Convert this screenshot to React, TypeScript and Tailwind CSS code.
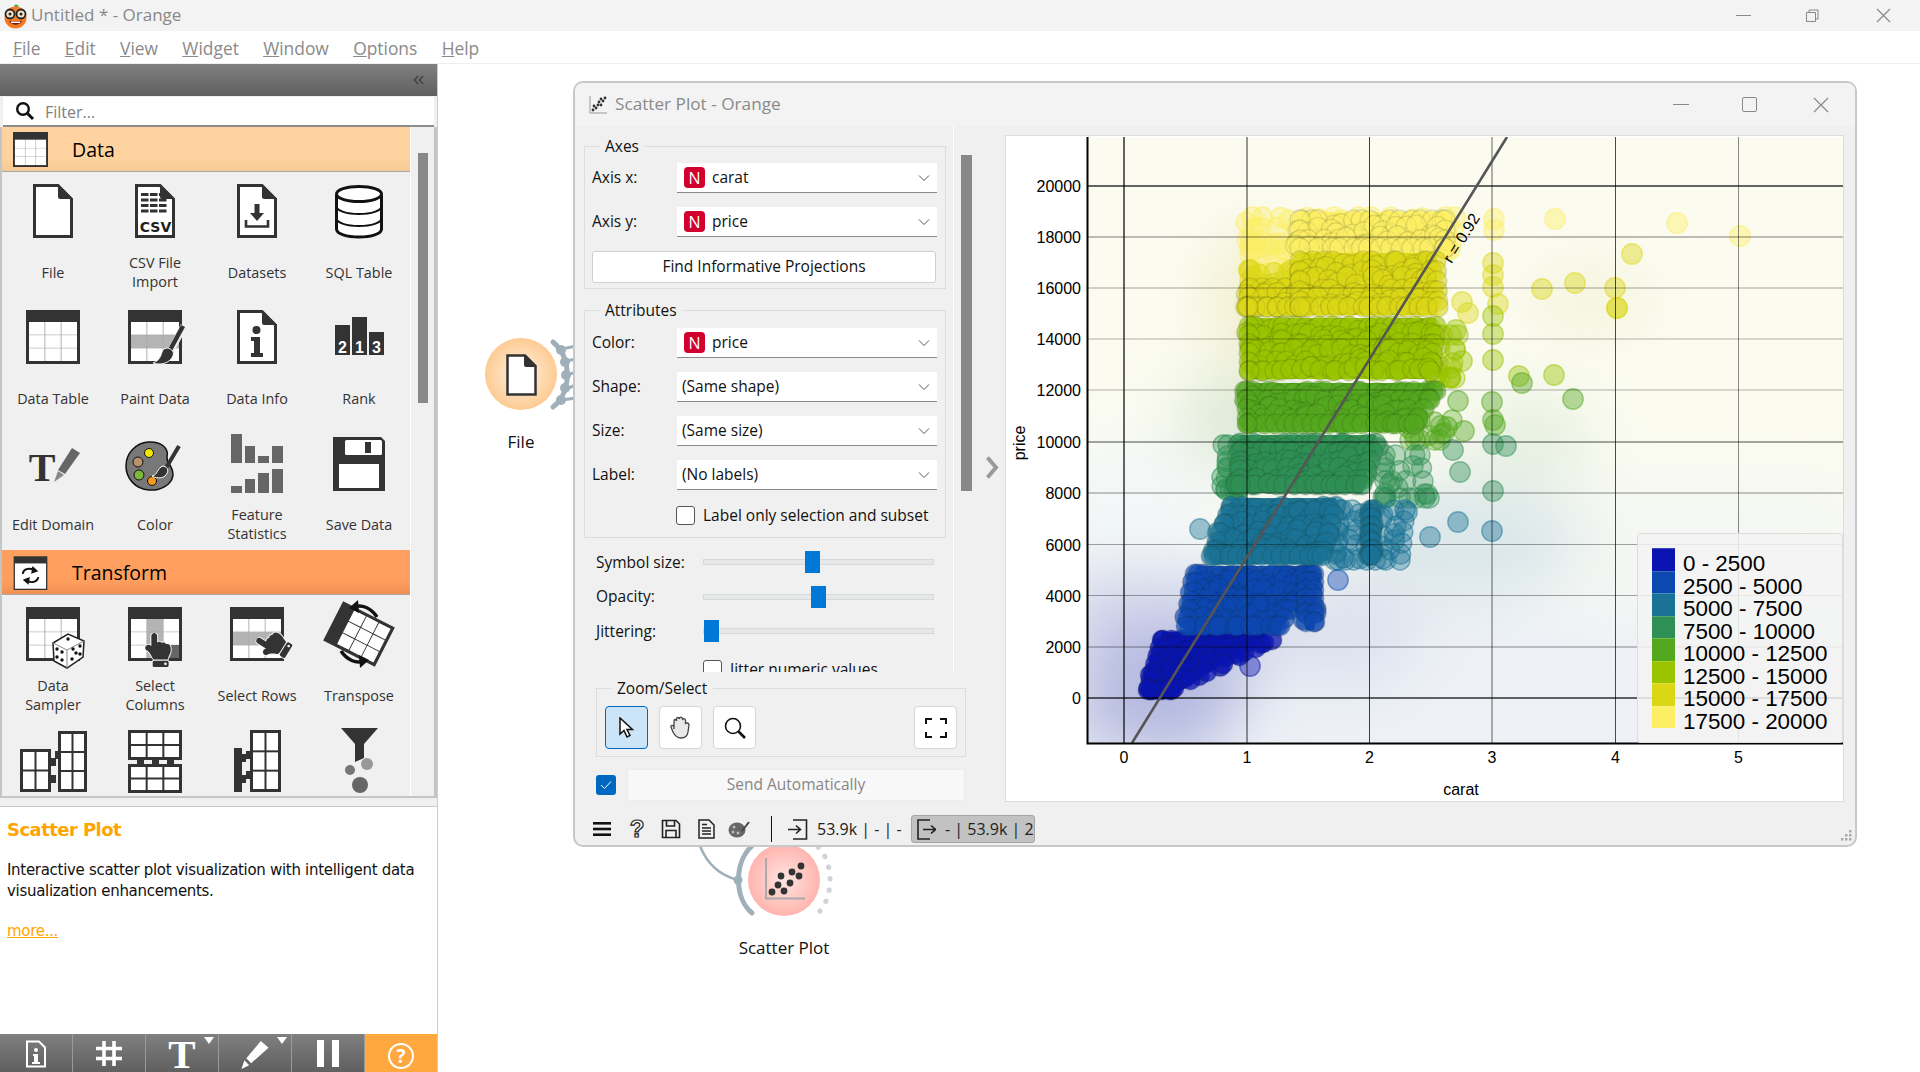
import { ReactNode, useMemo } from "react";
import { FaHandPointUp } from "react-icons/fa";

const DARK = "#333333";

// ---------- toolbox icons (76x66 box, centred on the cell) ----------
const Doc = ({ children }: { children?: ReactNode }) => (
  <>
    <path d="M19.5 7.5H43L56.5 21V58.5H19.5Z" fill="#fff" stroke={DARK} strokeWidth="3" />
    <path d="M43 6L58 21H45.5Q43 21 43 18.5Z" fill={DARK} />
    {children}
  </>
);

const Grid = ({ gray = [] }: { gray?: number[][] }) => {
  const cells = [];
  for (let r = 0; r < 3; r++) {
    for (let c = 0; c < 3; c++) {
      const isGray = gray.some((g) => g[0] === r && g[1] === c);
      cells.push(
        <rect key={`${r}-${c}`} x={14 + c * 16.3} y={18 + r * 13.2} width={15.4} height={12.6} fill={isGray ? "#b4b4b4" : "#fff"} />,
      );
    }
  }
  return (
    <>
      <rect x="11" y="6" width="54" height="54" fill={DARK} />
      <rect x="14" y="18" width="48" height="39" fill="#aaa" />
      {cells}
    </>
  );
};

const Frag = ({ x, y, w, h, cols, rows }: { x: number; y: number; w: number; h: number; cols: number; rows: number }) => {
  const cells = [];
  const cw = (w - 6 - (cols - 1) * 2) / cols;
  const ch = (h - 6 - (rows - 1) * 2) / rows;
  for (let r = 0; r < rows; r++) {
    for (let c = 0; c < cols; c++) {
      cells.push(<rect key={`${r}-${c}`} x={x + 3 + c * (cw + 2)} y={y + 3 + r * (ch + 2)} width={cw} height={ch} fill="#fff" />);
    }
  }
  return (
    <>
      <rect x={x} y={y} width={w} height={h} fill={DARK} />
      {cells}
    </>
  );
};

const Hand = ({ x, y, rotate = 0 }: { x: number; y: number; rotate?: number }) => (
  <g transform={`rotate(${rotate} ${x + 17} ${y + 17})`}>
    <FaHandPointUp x={x} y={y} size={34} color={DARK} stroke="#f4f4f4" strokeWidth={30} style={{ paintOrder: "stroke" }} />
  </g>
);

const Dice = () => (
  <g>
    <path d="M38 42L53 33L69 40L68 56L52 67L39 60Z" fill="#fff" stroke="#222" strokeWidth="1.5" />
    <path d="M38 42L52 49L69 40M52 49V67" fill="none" stroke="#888" strokeWidth="1" />
    {[[53, 38], [42, 48], [47, 51], [42, 56], [47, 59], [58, 48], [65, 45], [61, 52], [57, 58], [65, 53]].map((d) => (
      <circle key={d.join()} cx={d[0]} cy={d[1]} r="1.7" fill="#111" />
    ))}
  </g>
);

const Bars = ({ data }: { data: number[][] }) => (
  <>
    {data.map((b) => (
      <rect key={b.join()} x={b[0]} y={b[1]} width={b[2]} height={b[3]} fill="#666" />
    ))}
  </>
);

const tools: { title: string; tools: { label: string; icon: ReactNode }[] }[] = [
  {
    title: "Data",
    tools: [
      { label: "File", icon: <Doc /> },
      {
        label: "CSV File\nImport",
        icon: (
          <Doc>
            {[15, 20.5, 26, 31.5].map((y) => (
              <g key={y} fill="#333">
                <rect x="24" y={y} width="7.5" height="3" />
                <rect x="33" y={y} width="7.5" height="3" />
                <rect x="42" y={y} width="7.5" height="3" />
              </g>
            ))}
            <text x="38.5" y="54" textAnchor="middle" fontFamily="'DejaVu Sans', sans-serif" fontWeight="700" fontSize="14" fill="#222">
              CSV
            </text>
          </Doc>
        ),
      },
      {
        label: "Datasets",
        icon: (
          <Doc>
            <path d="M35.5 26H40.5V35H45L38 43L31 35H35.5Z" fill="#333" />
            <path d="M27 42V48.5H49V42" fill="none" stroke="#333" strokeWidth="2.6" />
          </Doc>
        ),
      },
      {
        label: "SQL Table",
        icon: (
          <g fill="none" stroke="#111" strokeWidth="3">
            <path d="M15.5 17V51C15.5 56 26 59 38 59S60.5 56 60.5 51V17" fill="#fff" />
            <ellipse cx="38" cy="16" rx="22.5" ry="7.5" fill="#fff" />
            <path d="M15.5 28C15.5 33 26 36 38 36S60.5 33 60.5 28" strokeWidth="2" />
            <path d="M15.5 40C15.5 45 26 48 38 48S60.5 45 60.5 40" strokeWidth="2" />
          </g>
        ),
      },
      { label: "Data Table", icon: <Grid /> },
      {
        label: "Paint Data",
        icon: (
          <>
            <Grid gray={[[1, 0], [1, 1], [1, 2]]} />
            <path d="M67 22L54 46" stroke="#f0f0f0" strokeWidth="7" />
            <path d="M66 22L53 46" stroke={DARK} strokeWidth="4.5" />
            <path d="M51 44C57 46 58 50 54 55C50 60 42 61 36 59C42 57 44 52 45 48C46 45 48 44 51 44Z" fill={DARK} stroke="#f0f0f0" strokeWidth="1" />
          </>
        ),
      },
      {
        label: "Data Info",
        icon: (
          <Doc>
            <circle cx="37.5" cy="26" r="4" fill="#333" />
            <path d="M32 33H41V49H44V53H32V49H35V37H32Z" fill="#333" />
          </Doc>
        ),
      },
      {
        label: "Rank",
        icon: (
          <g fontFamily="'Liberation Sans', sans-serif" fontWeight="700" fontSize="16" fill="#fff" textAnchor="middle">
            <rect x="14" y="21" width="15" height="30" fill={DARK} />
            <rect x="31" y="13" width="15" height="38" fill={DARK} />
            <rect x="48" y="28" width="15" height="23" fill={DARK} />
            <text x="21.5" y="49">2</text>
            <text x="38.5" y="49">1</text>
            <text x="55.5" y="49">3</text>
          </g>
        ),
      },
      {
        label: "Edit Domain",
        icon: (
          <>
            <text x="27" y="51" textAnchor="middle" fontFamily="'Liberation Serif', serif" fontWeight="700" fontSize="40" fill={DARK}>
              T
            </text>
            <path d="M57 18L65 23L50 44L43 40Z" fill="#666" />
            <path d="M43 41L49 45L39 52Z" fill="#888" />
          </>
        ),
      },
      {
        label: "Color",
        icon: (
          <>
            <path d="M31 12C44 11 52 18 50 27C49 33 56 35 56 45C55 55 43 61 32 60C18 59 9 48 9 36C9 23 19 13 31 12Z" fill="#787878" stroke="#111" strokeWidth="1.5" />
            <circle cx="32" cy="23" r="4.5" fill="#f5e600" stroke="#111" />
            <circle cx="21" cy="32" r="5" fill="#b8926a" stroke="#111" />
            <circle cx="22" cy="45" r="5" fill="#7db83a" stroke="#111" />
            <circle cx="35" cy="51" r="4.5" fill="#f39a1f" stroke="#111" />
            <path d="M62 16L49 38" stroke="#333" strokeWidth="4" />
            <path d="M46 36C52 37 52 42 48 46C44 49 38 48 35 46C41 45 40 38 46 36Z" fill="#333" stroke="#fff" strokeWidth="1" />
          </>
        ),
      },
      {
        label: "Feature\nStatistics",
        icon: (
          <Bars
            data={[
              [12, 4, 11, 29], [26, 16, 10, 17], [39, 26, 11, 7], [53, 16, 11, 17],
              [12, 56, 11, 7], [26, 49, 10, 14], [39, 43, 11, 20], [53, 39, 11, 24],
            ]}
          />
        ),
      },
      {
        label: "Save Data",
        icon: (
          <>
            <path d="M12 7H60L64 11V61H12Z" fill={DARK} />
            <rect x="24" y="10" width="37" height="15" rx="1.5" fill="#fff" />
            <rect x="44" y="12" width="6" height="11" fill={DARK} />
            <rect x="18" y="34" width="40" height="24" fill="#fff" />
          </>
        ),
      },
    ],
  },
  {
    title: "Transform",
    tools: [
      {
        label: "Data\nSampler",
        icon: (
          <>
            <Grid />
            <Dice />
          </>
        ),
      },
      {
        label: "Select\nColumns",
        icon: (
          <>
            <Grid gray={[[0, 1], [1, 1], [2, 1]]} />
            <rect x="46" y="44" width="16" height="13" fill="#666" />
            <Hand x={24} y={32} />
          </>
        ),
      },
      {
        label: "Select Rows",
        icon: (
          <>
            <Grid gray={[[1, 0], [1, 1], [1, 2]]} />
            <Hand x={37} y={27} rotate={-58} />
          </>
        ),
      },
      {
        label: "Transpose",
        icon: (
          <>
            <g transform="rotate(27 38 33)">
              <rect x="9" y="11" width="58" height="44" fill={DARK} />
              <rect x="23" y="14" width="41" height="38" fill={DARK} />
              {[0, 1, 2].map((c) =>
                [0, 1, 2].map((r) => <rect key={`${c}${r}`} x={23 + c * 13.9} y={14 + r * 12.9} width={13} height={12} fill="#fff" />),
              )}
            </g>
            <path d="M33 6C41 3 50 7 56 16" fill="none" stroke="#111" strokeWidth="3.5" />
            <path d="M37 -1L28 7L38 12Z" fill="#111" />
            <path d="M43 60C35 63 26 59 20 50" fill="none" stroke="#111" strokeWidth="3.5" />
            <path d="M39 67L48 59L38 54Z" fill="#111" />
          </>
        ),
      },
      {
        label: "",
        icon: (
          <>
            <Frag x={5} y={22} w={31} h={43} cols={2} rows={2} />
            <rect x="36" y="31" width="5" height="8" fill={DARK} />
            <rect x="36" y="48" width="5" height="8" fill={DARK} />
            <rect x="40" y="24" width="5" height="8" fill={DARK} />
            <Frag x={43} y={4} w={29} h={61} cols={2} rows={3} />
          </>
        ),
      },
      {
        label: "",
        icon: (
          <>
            <Frag x={11} y={3} w={54} h={30} cols={3} rows={2} />
            <Frag x={11} y={37} w={54} h={29} cols={3} rows={2} />
            <rect x="20" y="31" width="7" height="7" fill={DARK} />
            <rect x="35" y="31" width="7" height="7" fill={DARK} />
            <rect x="50" y="31" width="7" height="7" fill={DARK} />
          </>
        ),
      },
      {
        label: "",
        icon: (
          <>
            <rect x="15" y="21" width="8" height="44" fill={DARK} />
            <rect x="23" y="27" width="4" height="8" fill={DARK} />
            <rect x="23" y="48" width="4" height="8" fill={DARK} />
            <rect x="27" y="24" width="5" height="8" fill={DARK} />
            <rect x="27" y="44" width="5" height="8" fill={DARK} />
            <Frag x={31} y={3} w={31} h={62} cols={2} rows={3} />
          </>
        ),
      },
      {
        label: "",
        icon: (
          <>
            <path d="M20 1H57L43 17V31L34 35V17Z" fill={DARK} />
            <circle cx="46" cy="37" r="6" fill="#999" />
            <circle cx="29" cy="43" r="5" fill="#777" />
            <circle cx="39" cy="58" r="8" fill="#666" />
          </>
        ),
      },
    ],
  },
];

const Tool = ({ label, icon }: { label: string; icon: ReactNode }) => (
  <div className="flex h-[126px] w-[102px] flex-col items-center">
    <svg width="76" height="66" viewBox="0 0 76 66" className="mt-[6px] shrink-0 overflow-visible">
      {icon}
    </svg>
    <div className="mt-[8px] flex h-[40px] items-center justify-center whitespace-pre-line text-center text-[14.4px] leading-[19px] text-[#333]">
      {label}
    </div>
  </div>
);

const Category = ({ title, active }: { title: string; active?: boolean }) => (
  <div
    className={`flex h-[45px] items-center border-b border-[#a8a8a8] pl-[11px] ${
      active ? "bg-gradient-to-b from-[#ff9f5f] from-70% to-[#ef8f52]" : "bg-gradient-to-b from-[#ffd39f] from-70% to-[#f6ca94]"
    }`}
  >
    <svg width="35" height="35" viewBox="11 6 54 54" className="shrink-0">
      {active ? (
        <>
          <rect x="13" y="9" width="50" height="50" fill="#fff" stroke="#333" strokeWidth="2" />
          <rect x="13" y="9" width="50" height="10" fill="#333" />
          <path d="M26 35C27 28 35 25 43 29" fill="none" stroke="#111" strokeWidth="3" />
          <path d="M41 23L50 31L39 35Z" fill="#111" />
          <path d="M50 40C49 47 41 50 33 46" fill="none" stroke="#111" strokeWidth="3" />
          <path d="M35 52L26 44L37 40Z" fill="#111" />
        </>
      ) : (
        <Grid />
      )}
    </svg>
    <span className="ml-[24px] pt-[2px] text-[19.5px] text-black">{title}</span>
  </div>
);

const Dock = () => (
  <div className="relative z-10 flex w-[437px] shrink-0 flex-col bg-[#f0f0f0] shadow-[1px_0_0_#cccccc]">
    <div className="flex h-[32px] shrink-0 items-center justify-end bg-gradient-to-b from-[#808080] to-[#5f5f5f] pr-[13px]">
      <svg width="11" height="10" viewBox="0 0 11 10" fill="none" stroke="#444" strokeWidth="1.6">
        <path d="M5 1L1.500 5L5 9M10 1L6.500 5L10 9" />
      </svg>
    </div>
    <div className="mx-[3px] mt-[1px] flex h-[30px] shrink-0 items-center border-b-2 border-[#8c8c8c] bg-white pl-[12px]">
      <svg width="20" height="20" viewBox="0 0 20 20">
        <circle cx="8" cy="8" r="5.8" fill="none" stroke="#111" strokeWidth="2.4" />
        <path d="M12.5 12.5L18 18" stroke="#111" strokeWidth="3" />
      </svg>
      <span className="ml-[10px] pt-[2px] text-[16px] text-[#808080]">Filter...</span>
    </div>
    <div className="flex h-[671px] shrink-0 overflow-hidden border-b-2 border-l-2 border-r-[3px] border-[#c2c6c6]">
      <div className="w-[408px] shrink-0">
        {tools.map((group) => (
          <div key={group.title}>
            <Category title={group.title} active={group.title === "Transform"} />
            <div className="flex flex-wrap">
              {group.tools.map((t, i) => (
                <Tool key={i} label={t.label} icon={t.icon} />
              ))}
            </div>
          </div>
        ))}
      </div>
      <div className="flex-1 border-l border-white pl-[7px] pt-[26px]">
        <div className="h-[250px] w-[10px] bg-[#888888]" />
      </div>
    </div>
    <div className="h-[9px] shrink-0 border-b border-[#c8cccc] bg-[#f0f0f0]" />
    <div className="flex-1 bg-white px-[7px] pt-[11px] font-['DejaVu_Sans',sans-serif] text-[#111]">
      <div className="text-[18px] font-bold leading-[24px] tracking-[-0.55px] text-[#ffa500]">Scatter Plot</div>
      <p className="mt-[18px] text-[15px] leading-[21px] tracking-[-0.3px]">
        Interactive scatter plot visualization with intelligent data visualization enhancements.
      </p>
      <a className="mt-[18px] block text-[15px] tracking-[-0.3px] text-[#ffa500] underline">more...</a>
    </div>
    <DockToolbar />
  </div>
);

const DockToolbar = () => (
  <div className="flex h-[38px] shrink-0 bg-gradient-to-b from-[#808080] to-[#5f5f5f]">
    <ToolbarButton>
      <svg width="22" height="28" viewBox="0 0 22 28">
        <path d="M2 1.5H14L20 7.5V26.5H2Z" fill="none" stroke="#fff" strokeWidth="2" />
        <circle cx="11" cy="10" r="2" fill="#fff" />
        <path d="M8 14H13V22H15V24H7V22H9V16H8Z" fill="#fff" />
      </svg>
    </ToolbarButton>
    <ToolbarButton>
      <svg width="28" height="27" viewBox="0 0 28 27" stroke="#fff" strokeWidth="3.6">
        <path d="M9 1V26M19 1V26M1 8.500H27M1 18.500H27" />
      </svg>
    </ToolbarButton>
    <ToolbarButton menu>
      <span className="font-['Liberation_Serif',serif] text-[41px] font-bold leading-[28px] text-white">T</span>
    </ToolbarButton>
    <ToolbarButton menu>
      <svg width="28" height="29" viewBox="0 0 28 30">
        <path d="M20 1L28 8L10 24L5 19Z M3 21L8 26L0 30Z" fill="#fff" />
      </svg>
    </ToolbarButton>
    <ToolbarButton>
      <div className="flex gap-[8px]">
        <div className="h-[27px] w-[7px] bg-white" />
        <div className="h-[27px] w-[7px] bg-white" />
      </div>
    </ToolbarButton>
    <div className="flex flex-1 items-start justify-center bg-[#ffa840] pt-[9px]">
      <div className="flex h-[26px] w-[26px] items-center justify-center rounded-full border-2 border-white text-[19px] font-bold leading-none text-white">
        ?
      </div>
    </div>
  </div>
);

const ToolbarButton = ({ children, menu }: { children: ReactNode; menu?: boolean }) => (
  <div className="relative flex h-full w-[73px] items-start justify-center border-r border-[#9a9a9a] pt-[6px]">
    {children}
    {menu && <span className="absolute right-[4px] top-[3px] h-0 w-0 border-x-[5px] border-t-[7px] border-x-transparent border-t-white" />}
  </div>
);

// ---------- scatter plot ----------
const BANDS = {
  c0: "#0a14b0",
  c1: "#0d47b0",
  c2: "#1a7396",
  c3: "#2f9055",
  c4: "#54a81e",
  c5: "#9ac400",
  c6: "#dcd716",
  c7: "#fdee65",
};

// colour, y0, left0, right0, y1, left1, right1, step, alpha (from 0.55 up the region gets a solid body)
type Region = [string, number, number, number, number, number, number, number, number];
const regions: Region[] = [
  [BANDS.c7, 217, 1252, 1455, 250, 1252, 1450, 13, 0.38],
  [BANDS.c7, 240, 1250, 1300, 272, 1250, 1300, 15, 0.3],
  [BANDS.c7, 220, 1300, 1445, 248, 1300, 1445, 10, 0.55],
  [BANDS.c6, 270, 1250, 1296, 290, 1250, 1296, 11, 0.4],
  [BANDS.c6, 288, 1250, 1300, 307, 1248, 1300, 9, 0.55],
  [BANDS.c6, 261, 1300, 1436, 307, 1300, 1438, 10, 0.6],
  [BANDS.c5, 335, 1442, 1458, 378, 1435, 1450, 14, 0.32],
  [BANDS.c5, 326, 1249, 1436, 371, 1249, 1430, 9, 0.6],
  [BANDS.c4, 420, 1420, 1452, 440, 1410, 1440, 13, 0.33],
  [BANDS.c4, 391, 1247, 1436, 424, 1247, 1414, 9, 0.62],
  [BANDS.c3, 445, 1228, 1238, 490, 1226, 1238, 11, 0.38],
  [BANDS.c3, 455, 1385, 1420, 498, 1385, 1425, 13, 0.32],
  [BANDS.c3, 443, 1240, 1376, 485, 1240, 1362, 9, 0.62],
  [BANDS.c0, 640, 1162, 1272, 690, 1148, 1170, 8, 0.75],
  [BANDS.c1, 574, 1198, 1312, 626, 1186, 1280, 9, 0.65],
  [BANDS.c1, 574, 1306, 1314, 622, 1306, 1314, 8, 0.6],
  [BANDS.c2, 510, 1340, 1405, 560, 1335, 1400, 11, 0.34],
  [BANDS.c2, 506, 1231, 1336, 556, 1211, 1322, 9, 0.65],
  [BANDS.c2, 510, 1370, 1372, 555, 1370, 1372, 8, 0.6],
];

// isolated points, in reference pixels
const lone: [number, number, string][] = [
  [1494, 219, BANDS.c7], [1555, 219, BANDS.c7], [1677, 223, BANDS.c7], [1740, 236, BANDS.c7],
  [1494, 230, BANDS.c7], [1632, 254, BANDS.c6], [1493, 263, BANDS.c6], [1542, 289, BANDS.c6],
  [1575, 283, BANDS.c6], [1615, 288, BANDS.c6], [1617, 308, BANDS.c6], [1617, 308, BANDS.c6],
  [1493, 275, BANDS.c6], [1493, 287, BANDS.c6], [1498, 304, BANDS.c6], [1462, 302, BANDS.c6],
  [1468, 313, BANDS.c6], [1493, 316, BANDS.c5], [1493, 334, BANDS.c5], [1456, 330, BANDS.c5],
  [1462, 361, BANDS.c5], [1493, 360, BANDS.c5], [1519, 376, BANDS.c5], [1522, 383, BANDS.c4],
  [1554, 375, BANDS.c5], [1573, 399, BANDS.c4], [1492, 402, BANDS.c4], [1458, 401, BANDS.c4],
  [1493, 420, BANDS.c4], [1495, 425, BANDS.c4], [1447, 427, BANDS.c4], [1464, 431, BANDS.c4],
  [1493, 444, BANDS.c3], [1506, 446, BANDS.c3], [1453, 450, BANDS.c3], [1460, 472, BANDS.c3],
  [1493, 491, BANDS.c3], [1430, 537, BANDS.c2], [1458, 522, BANDS.c2], [1407, 512, BANDS.c2],
  [1200, 529, BANDS.c2], [1492, 531, BANDS.c2], [1250, 666, BANDS.c0], [1338, 580, BANDS.c1],
];

const xTicks = [
  { x: 1124, label: "0", w: 2, o: 0.6 },
  { x: 1247, label: "1", w: 2, o: 0.4 },
  { x: 1369.5, label: "2", w: 1, o: 0.75 },
  { x: 1492, label: "3", w: 1.5, o: 0.4 },
  { x: 1615.5, label: "4", w: 1, o: 0.7 },
  { x: 1738.5, label: "5", w: 1, o: 0.45 },
];
const yTicks = [
  { y: 186, label: "20000", w: 2, o: 0.6 },
  { y: 237, label: "18000", w: 2, o: 0.25 },
  { y: 288, label: "16000", w: 1, o: 0.35 },
  { y: 339, label: "14000", w: 1, o: 0.3 },
  { y: 390, label: "12000", w: 1, o: 0.3 },
  { y: 442, label: "10000", w: 2, o: 0.35 },
  { y: 493, label: "8000", w: 2, o: 0.22 },
  { y: 544.5, label: "6000", w: 1, o: 0.35 },
  { y: 595.5, label: "4000", w: 1, o: 0.35 },
  { y: 647, label: "2000", w: 2, o: 0.22 },
  { y: 698, label: "0", w: 2, o: 0.6 },
];

const legend = [
  ["0 - 2500", BANDS.c0],
  ["2500 - 5000", BANDS.c1],
  ["5000 - 7500", BANDS.c2],
  ["7500 - 10000", BANDS.c3],
  ["10000 - 12500", BANDS.c4],
  ["12500 - 15000", BANDS.c5],
  ["15000 - 17500", BANDS.c6],
  ["17500 - 20000", BANDS.c7],
];

const Plot = () => {
  const groups = useMemo(() => {
    let seed = 7;
    const rnd = () => {
      seed = (seed * 16807) % 2147483647;
      return seed / 2147483647;
    };
    return regions.map(([c, y0, l0, r0, y1, l1, r1, step, a]) => {
      const dots: { x: number; y: number }[] = [];
      for (let y = y0; y <= y1 + step - 1; y += step) {
        const t = Math.min(1, (y - y0) / Math.max(1, y1 - y0));
        const l = l0 + (l1 - l0) * t;
        const r = r0 + (r1 - r0) * t;
        for (let x = l; x <= r; x += step) {
          dots.push({ x: x + (rnd() - 0.5) * step * 0.9, y: Math.min(y1, Math.max(y0, y + (rnd() - 0.5) * step)) });
        }
        // the outer circles on both sides give the band its scalloped edge
        dots.push({ x: l, y: Math.min(y1, y) }, { x: r, y: Math.min(y1, y) });
      }
      const body = `${l0},${y0 - 8} ${r0},${y0 - 8} ${r1},${y1 + 8} ${l1},${y1 + 8}`;
      return { c, a, dots, body, solid: a >= 0.55 };
    });
  }, []);

  return (
    <div className="relative mt-[10px] h-[665px] w-[837px] shrink-0 bg-white shadow-[0_0_0_1px_#dcdcdc]">
      <svg width="837" height="665" viewBox="1006 136 837 665" fontFamily="'Liberation Sans', sans-serif" fontSize="16" fill="#000">
        <defs>
          <clipPath id="plot-area">
            <rect x="1087" y="137" width="756" height="606" />
          </clipPath>
          <filter id="soft" x="-60%" y="-60%" width="220%" height="220%">
            <feGaussianBlur stdDeviation="30" />
          </filter>
        </defs>
        <g clipPath="url(#plot-area)">
          <rect x="1087" y="137" width="756" height="606" fill="#fbfbf0" />
          <g filter="url(#soft)">
            <rect x="1040" y="600" width="850" height="200" fill="#edf1f6" />
            <rect x="1040" y="440" width="180" height="200" fill="#f3f7f7" />
            <rect x="1560" y="480" width="300" height="140" fill="#f4f7f3" />
            <ellipse cx="1470" cy="540" rx="110" ry="60" fill="#dbe7ea" />
            <ellipse cx="1250" cy="420" rx="70" ry="50" fill="#dde9d6" />
            <ellipse cx="1530" cy="440" rx="60" ry="40" fill="#e4efdf" />
            <ellipse cx="1260" cy="300" rx="50" ry="70" fill="#f2efcd" />
            <ellipse cx="1590" cy="300" rx="60" ry="26" fill="#f3f2d6" />
            <rect x="1060" y="570" width="150" height="190" fill="#d3d6eb" />
            <ellipse cx="1220" cy="630" rx="90" ry="60" fill="#d5d9ec" />
            <ellipse cx="1165" cy="690" rx="80" ry="70" fill="#b5b9e0" />
            <ellipse cx="1340" cy="630" rx="80" ry="60" fill="#dde2ef" />
          </g>
          {groups.map((g, i) => (
            <g key={i}>
              {g.solid && <polygon points={g.body} fill={g.c} fillOpacity="0.94" />}
              {g.dots.map((p, j) => (
                <circle
                  key={j}
                  cx={p.x}
                  cy={p.y}
                  r="10"
                  fill={g.c}
                  fillOpacity={g.a}
                  stroke={g.solid ? "#1a2a10" : g.c}
                  strokeOpacity={g.solid ? 0.12 : Math.min(1, g.a + 0.2)}
                  strokeWidth="1.4"
                />
              ))}
            </g>
          ))}
          {lone.map(([x, y, c], i) => (
            <circle key={i} cx={x} cy={y} r="10.2" fill={c} fillOpacity={0.42} stroke={c} strokeOpacity={0.5} strokeWidth="1.4" />
          ))}
          {xTicks.map((t) => (
            <line key={t.x} x1={t.x} x2={t.x} y1="137" y2="743" stroke="#000" strokeWidth={t.w} strokeOpacity={t.o} />
          ))}
          {yTicks.map((t) => (
            <line key={t.y} x1="1087" x2="1843" y1={t.y} y2={t.y} stroke="#000" strokeWidth={t.w} strokeOpacity={t.o} />
          ))}
          <line x1="1132" y1="743" x2="1507" y2="137" stroke="#555" strokeWidth="2.6" />
        </g>
        <text x="0" y="0" fontSize="16" textAnchor="middle" transform="translate(1466 241) rotate(-58)">
          r = 0.92
        </text>
        <path d="M1087.5 137V743.5H1843" fill="none" stroke="#000" strokeWidth="2" />
        {xTicks.map((t) => (
          <text key={t.label} x={t.x} y="763" textAnchor="middle">
            {t.label}
          </text>
        ))}
        {yTicks.map((t) => (
          <text key={t.label} x="1081" y={t.y + 6} textAnchor="end">
            {t.label}
          </text>
        ))}
        <text x="1461" y="795" textAnchor="middle">
          carat
        </text>
        <text x="0" y="0" textAnchor="middle" transform="translate(1025 443) rotate(-90)">
          price
        </text>
      </svg>
      {/* legend floats over the plot */}
      <div className="absolute bottom-[58px] right-0 flex h-[210px] w-[206px] rounded-[3px] border border-[#dedede] bg-[#f3f3f3]/85 pl-[14px] pt-[14px]">
        <div className="flex w-[23px] shrink-0 flex-col">
          {legend.map(([, c]) => (
            <div key={c} className="h-[22.5px] border-t border-white/20" style={{ background: c }} />
          ))}
        </div>
        <div className="ml-[8px] flex flex-col pt-[5px] font-['Liberation_Sans',sans-serif] text-[22.4px] leading-[22.5px] text-black">
          {legend.map(([label]) => (
            <div key={label} className="whitespace-nowrap">
              {label}
            </div>
          ))}
        </div>
      </div>
    </div>
  );
};

// ---------- widget window controls ----------
const Chevron = () => (
  <svg width="12" height="8" viewBox="0 0 12 8" className="shrink-0">
    <path d="M1 1.5L6 6.5L11 1.5" fill="none" stroke="#555" strokeWidth="1" />
  </svg>
);

const Combo = ({ value, numeric }: { value: string; numeric?: boolean }) => (
  <div className="flex h-[30px] w-[260px] shrink-0 items-center border-b border-[#8a8a8a] bg-white pl-[5px] pr-[7px] text-[#111]">
    {numeric && (
      <span className="mr-[7px] ml-[2px] flex h-[21px] w-[21px] shrink-0 items-center justify-center rounded-[4px] bg-[#d1002f] text-[16px] text-white">
        N
      </span>
    )}
    <span className="flex-1">{value}</span>
    <Chevron />
  </div>
);

const FieldRow = ({ label, value, numeric }: { label: string; value: string; numeric?: boolean }) => (
  <div className="flex items-center">
    <span className="w-[85px] shrink-0 text-[#111]">{label}</span>
    <Combo value={value} numeric={numeric} />
  </div>
);

const Slider = ({ label, offset }: { label: string; offset: string }) => (
  <div className="flex h-[22px] items-center">
    <span className="w-[107px] shrink-0 text-[#111]">{label}</span>
    <div className="relative h-[6px] w-[231px] border border-[#d6d9d9] bg-[#e6e8e8]">
      <div className={`absolute top-[-9px] h-[22px] w-[15px] bg-[#0078d7] ${offset}`} />
    </div>
  </div>
);

const ToolBtn = ({ active, children, className = "" }: { active?: boolean; children: ReactNode; className?: string }) => (
  <div
    className={`flex h-[43px] w-[43px] items-center justify-center rounded-[4px] border ${
      active ? "border-[#0067c0] bg-[#cce4f7]" : "border-[#d6d6d6] bg-white"
    } ${className}`}
  >
    {children}
  </div>
);

const Controls = () => (
  <div className="flex w-[431px] shrink-0 flex-col">
    <div className="flex h-[546px] shrink-0">
      <div className="w-[379px] shrink-0 overflow-hidden border-r border-white pt-[10px]">
        <fieldset className="ml-[9px] w-[362px] border border-[#dcdcdc] px-[7px] pb-[5px] pt-[7px]">
          <legend className="ml-[7px] px-[6px] leading-[20px] text-[#111]">Axes</legend>
          <div className="flex flex-col gap-[14px]">
            <FieldRow label="Axis x:" value="carat" numeric />
            <FieldRow label="Axis y:" value="price" numeric />
            <div className="flex h-[32px] w-[344px] items-center justify-center rounded-[3px] border border-[#d0d0d0] bg-white text-[#111]">
              Find Informative Projections
            </div>
          </div>
        </fieldset>
        <fieldset className="ml-[9px] mt-[11px] w-[362px] border border-[#dcdcdc] px-[7px] pb-[10px] pt-[8px]">
          <legend className="ml-[7px] px-[6px] leading-[20px] text-[#111]">Attributes</legend>
          <div className="flex flex-col gap-[14px]">
            <FieldRow label="Color:" value="price" numeric />
            <FieldRow label="Shape:" value="(Same shape)" />
            <FieldRow label="Size:" value="(Same size)" />
            <FieldRow label="Label:" value="(No labels)" />
          </div>
          <div className="ml-[84px] mt-[14px] flex items-center">
            <span className="h-[19px] w-[19px] rounded-[3px] border border-[#555] bg-white" />
            <span className="ml-[8px] whitespace-nowrap text-[#111]">Label only selection and subset</span>
          </div>
        </fieldset>
        <div className="ml-[21px] mt-[13px] flex flex-col gap-[12.5px]">
          <Slider label="Symbol size:" offset="left-[101px]" />
          <Slider label="Opacity:" offset="left-[107px]" />
          <Slider label="Jittering:" offset="left-0" />
        </div>
        <div className="ml-[128px] mt-[16px] flex items-center">
          <span className="h-[19px] w-[19px] rounded-[3px] border border-[#555] bg-white" />
          <span className="ml-[8px] whitespace-nowrap text-[#111]">Jitter numeric values</span>
        </div>
      </div>
      <div className="ml-[7px] mt-[29px] h-[336px] w-[11px] bg-[#888888]" />
      <svg width="14" height="25" viewBox="0 0 14 25" className="ml-[13px] mt-[329px]">
        <path d="M2.5 2.5L11 12.5L2.5 22.5" fill="none" stroke="#9a9a9a" strokeWidth="4" />
      </svg>
    </div>
    <fieldset className="ml-[21px] mt-[6px] w-[370px] border border-[#dcdcdc] px-[8px] pb-[7px] pt-[8px]">
      <legend className="ml-[6px] px-[6px] leading-[20px] text-[#111]">Zoom/Select</legend>
      <div className="flex gap-[11px]">
        <ToolBtn active>
          <svg width="18" height="22" viewBox="0 0 18 22">
            <path d="M2 1V17L6 13.5L9 20L12 18.5L9 12.5H14.5Z" fill="#fff" stroke="#111" strokeWidth="1.5" />
          </svg>
        </ToolBtn>
        <ToolBtn>
          <svg width="24" height="25" viewBox="0 0 24 25">
            <path d="M5 14V6C5 4 7 4 7.500 6V4C7.500 2 10 2 10.500 4V3.500C10.500 1.500 13.500 1.500 13.500 4V5C14 3 16.500 3 16.500 5.500V9C17 7.500 20 7.500 20 10L19 17C18.500 21 16 23 12 23C8 23 6 21 4 17L2 12C1.500 10 4 9.500 5 12Z" fill="#e8e8e8" stroke="#444" strokeWidth="1.3" />
          </svg>
        </ToolBtn>
        <ToolBtn>
          <svg width="24" height="24" viewBox="0 0 24 24">
            <circle cx="10" cy="10" r="7.500" fill="#fff" stroke="#111" strokeWidth="1.6" />
            <path d="M15.500 15.500L22 22" stroke="#111" strokeWidth="2.6" />
          </svg>
        </ToolBtn>
        <ToolBtn className="ml-auto">
          <svg width="22" height="20" viewBox="0 0 22 20" fill="none" stroke="#111" strokeWidth="2">
            <path d="M1 6V1H7M15 1H21V6M21 14V19H15M7 19H1V14" />
          </svg>
        </ToolBtn>
      </div>
    </fieldset>
    <div className="ml-[21px] mt-[12px] flex items-center">
      <span className="flex h-[20px] w-[20px] items-center justify-center rounded-[3px] bg-[#0067c0]">
        <svg width="12" height="10" viewBox="0 0 12 10">
          <path d="M1 5L4.500 8.500L11 1.500" fill="none" stroke="#fff" strokeWidth="1" />
        </svg>
      </span>
      <div className="ml-[11px] flex h-[32px] w-[338px] items-center justify-center rounded-[3px] border border-[#ececec] bg-[#f8f8f8] text-[#868686]">
        Send Automatically
      </div>
    </div>
  </div>
);

const StatusBar = () => (
  <div className="flex h-[39px] shrink-0 items-center pl-[18px] pt-[7px] text-[#222]">
    <svg width="18" height="16" viewBox="0 0 18 16" fill="#111">
      <rect y="1" width="18" height="2.600" />
      <rect y="6.700" width="18" height="2.600" />
      <rect y="12.400" width="18" height="2.600" />
    </svg>
    <svg width="18" height="30" viewBox="0 0 18 30" className="ml-[17px] -my-[3px]">
      <text x="9" y="23" textAnchor="middle" fontFamily="'Liberation Sans', sans-serif" fontWeight="700" fontSize="24" fill="#fff" stroke="#222" strokeWidth="1.200">
        ?
      </text>
    </svg>
    <svg width="20" height="20" viewBox="0 0 20 20" fill="none" stroke="#222" strokeWidth="1.600" className="ml-[15px]">
      <path d="M1.500 1.500H15L18.500 5V18.500H1.500ZM5.500 1.500V7H13.500V1.500M5 18.500V11.500H15V18.500" />
    </svg>
    <svg width="17" height="20" viewBox="0 0 17 20" fill="none" stroke="#222" strokeWidth="1.500" className="ml-[17px]">
      <path d="M1 1H11L16 6V19H1ZM4 9H13M4 12H13M4 15H13M4 5.500H9" />
    </svg>
    <svg width="23" height="18" viewBox="0 0 23 18" className="ml-[13px]">
      <ellipse cx="9" cy="10" rx="8.500" ry="7.500" fill="#666" />
      <circle cx="6" cy="7" r="1.500" fill="#bbb" />
      <circle cx="5" cy="12" r="1.500" fill="#bbb" />
      <circle cx="10" cy="13" r="1.500" fill="#bbb" />
      <path d="M21 2L14 11" stroke="#444" strokeWidth="2" />
    </svg>
    <span className="ml-[20px] h-[26px] w-px bg-[#111]" />
    <svg width="20" height="21" viewBox="0 0 20 21" fill="none" stroke="#222" strokeWidth="1.600" className="ml-[16px]">
      <path d="M5 1H18.500V20H5M0 10.500H12M8 6.500L12.500 10.500L8 14.500" />
    </svg>
    <span className="ml-[9px] w-[94px] whitespace-nowrap text-[16px]">53.9k | - | -</span>
    <div className="flex h-[28px] w-[124px] items-center rounded-[3px] border border-[#a4a4a4] bg-[#c2c2c2] pl-[5px]">
      <svg width="19" height="21" viewBox="0 0 19 21" fill="none" stroke="#222" strokeWidth="1.600">
        <path d="M13 1H1V20H13M6 10.500H18M14 6.500L18.500 10.500L14 14.500" />
      </svg>
      <span className="ml-[9px] whitespace-nowrap text-[16px]">- | 53.9k | 2</span>
    </div>
  </div>
);

const ScatterWindow = () => (
  <div className="absolute left-[136px] top-[17px] flex h-[766px] w-[1284px] flex-col overflow-hidden rounded-[10px] border-2 border-[#c8c8c8] bg-[#f0f0f0]">
    <div className="flex h-[43px] shrink-0 items-center bg-[#f3f3f3] pl-[14px]">
      <svg width="18" height="18" viewBox="0 0 18 18">
        <path d="M1 0V17H18" fill="none" stroke="#999" strokeWidth="1" />
        {[[4, 14], [7, 12], [5, 10], [9, 9], [12, 9], [10, 6], [14, 5], [16, 2], [12, 3]].map((d) => (
          <circle key={d.join()} cx={d[0]} cy={d[1]} r="1.400" fill="#333" />
        ))}
      </svg>
      <span className="ml-[8px] pb-[2px] text-[17.2px] text-[#8a8a8a]">Scatter Plot - Orange</span>
      <div className="ml-auto flex items-center pr-[26px] text-[#888]">
        <span className="h-px w-[16px] bg-[#888]" />
        <span className="ml-[53px] h-[15px] w-[15px] rounded-[2px] border-[1.5px] border-[#888]" />
        <svg width="16" height="16" viewBox="0 0 16 16" className="ml-[56px]" stroke="#888" strokeWidth="1.200">
          <path d="M1 1L15 15M15 1L1 15" />
        </svg>
      </div>
    </div>
    <div className="flex flex-1">
      <Controls />
      <Plot />
    </div>
    <StatusBar />
    <svg width="12" height="12" viewBox="0 0 12 12" className="absolute bottom-[3px] right-[3px]" fill="#aaa">
      {[[9, 0], [5, 4], [9, 4], [1, 8], [5, 8], [9, 8]].map((d) => (
        <rect key={d.join()} x={d[0]} y={d[1]} width="2.500" height="2.500" />
      ))}
    </svg>
  </div>
);

// ---------- canvas ----------
const Canvas = () => (
  <div className="relative flex-1 overflow-hidden bg-white">
    {/* node coordinates are the content of the canvas; svg is offset by the dock and menu */}
    <svg width="1483" height="1008" viewBox="437 64 1483 1008" className="absolute left-0 top-0">
      <defs>
        <radialGradient id="node-file">
          <stop offset="0%" stopColor="#fff3e2" />
          <stop offset="100%" stopColor="#fdcb93" />
        </radialGradient>
        <radialGradient id="node-scatter">
          <stop offset="0%" stopColor="#ffe5e2" />
          <stop offset="100%" stopColor="#ffb4ae" />
        </radialGradient>
      </defs>
      <g stroke="#9fb0ba" fill="none">
        <path d="M553 342C572 358 572 392 553 407" strokeWidth="5" strokeLinecap="round" />
        <path d="M562 349L576 346M566 361L576 359M567 375L576 372M566 389L576 385M562 400L576 398" strokeWidth="3" />
        <g fill="#9fb0ba" stroke="none">
          <circle cx="561" cy="350" r="5" />
          <circle cx="565" cy="362" r="5" />
          <circle cx="566" cy="375" r="5" />
          <circle cx="565" cy="388" r="5" />
          <circle cx="561" cy="400" r="5" />
        </g>
      </g>
      <circle cx="521" cy="374" r="36" fill="url(#node-file)" />
      <path d="M507.500 355.500H525L535.500 366V394.500H507.500Z" fill="#fff" stroke="#333" strokeWidth="2.500" />
      <path d="M524 354.500L536.500 367H526Q524 367 524 365Z" fill="#333" />

      <path d="M700 846C708 866 722 876 738 880" fill="none" stroke="#9fb0ba" strokeWidth="2.500" />
      <path d="M752 846C734 862 734 898 752 913" fill="none" stroke="#9fb0ba" strokeWidth="5" strokeLinecap="round" />
      <circle cx="738" cy="880" r="4.500" fill="#9fb0ba" />
      <circle cx="784" cy="880" r="36" fill="url(#node-scatter)" />
      <path d="M818 847C834 862 834 898 818 913" fill="none" stroke="#cdd5d9" strokeWidth="5" strokeLinecap="round" strokeDasharray="0.500 11" />
      <path d="M766 858V898.500H805" fill="none" stroke="#aaa" strokeWidth="2" />
      {[[772, 892], [778, 885], [784, 891], [781, 876], [790, 883], [792, 872], [799, 876], [801, 866]].map((d) => (
        <circle key={d.join()} cx={d[0]} cy={d[1]} r="3.400" fill="#333" />
      ))}
    </svg>
    <span className="absolute left-[64px] top-[365px] w-[40px] text-center text-[17px] text-[#111]">File</span>
    <span className="absolute left-[287px] top-[871px] w-[120px] text-center text-[17px] text-[#111]">Scatter Plot</span>
    <ScatterWindow />
  </div>
);

const Logo = () => (
  <svg width="26" height="26" viewBox="0 0 26 26" className="shrink-0">
    <path d="M12 3C13 1 15 1 17 3L14 5Z" fill="#3fae49" />
    <circle cx="13.500" cy="14.500" r="11" fill="#f47a1f" />
    <path d="M7 18C10 23 17 23 20 18Z" fill="#7a1d10" />
    <path d="M9 18.500H18V20H9Z" fill="#fff" />
    <circle cx="8" cy="11" r="4.500" fill="#f4e3c8" stroke="#222" strokeWidth="1.800" />
    <circle cx="19" cy="11" r="4.500" fill="#f4e3c8" stroke="#222" strokeWidth="1.800" />
    <circle cx="8" cy="11" r="1.500" fill="#222" />
    <circle cx="19" cy="11" r="1.500" fill="#222" />
  </svg>
);

const menu = [
  ["F", "ile"],
  ["E", "dit"],
  ["V", "iew"],
  ["W", "idget"],
  ["W", "indow"],
  ["O", "ptions"],
  ["H", "elp"],
];

export default function App() {
  return (
    <div className="flex h-[1072px] w-[1920px] flex-col overflow-hidden bg-white font-['Open_Sans',sans-serif] text-[15.5px] text-[#111]">
      <div className="flex h-[31px] shrink-0 items-center bg-[#f3f3f3] pl-[2px]">
        <Logo />
        <span className="ml-[3px] pb-[2px] text-[17px] text-[#888]">Untitled * - Orange</span>
        <div className="ml-auto flex items-center pr-[29px]">
          <span className="h-px w-[15px] bg-[#888]" />
          <svg width="14" height="14" viewBox="0 0 14 14" className="ml-[54px]" fill="none" stroke="#888">
            <path d="M1.500 3.500H10.500V12.500H1.500ZM4 3.500V1H13V10H10.500" />
          </svg>
          <svg width="15" height="15" viewBox="0 0 15 15" className="ml-[57px]" stroke="#888" strokeWidth="1.200">
            <path d="M1 1L14 14M14 1L1 14" />
          </svg>
        </div>
      </div>
      <div className="flex h-[33px] shrink-0 items-center gap-[24.3px] border-b border-[#f0f0f0] bg-white pl-[13px] pt-[2px] text-[17.4px] text-[#8a8a8a]">
        {menu.map(([first, rest]) => (
          <span key={first + rest}>
            <span className="underline">{first}</span>
            {rest}
          </span>
        ))}
      </div>
      <div className="flex h-[1008px] shrink-0">
        <Dock />
        <Canvas />
      </div>
    </div>
  );
}
